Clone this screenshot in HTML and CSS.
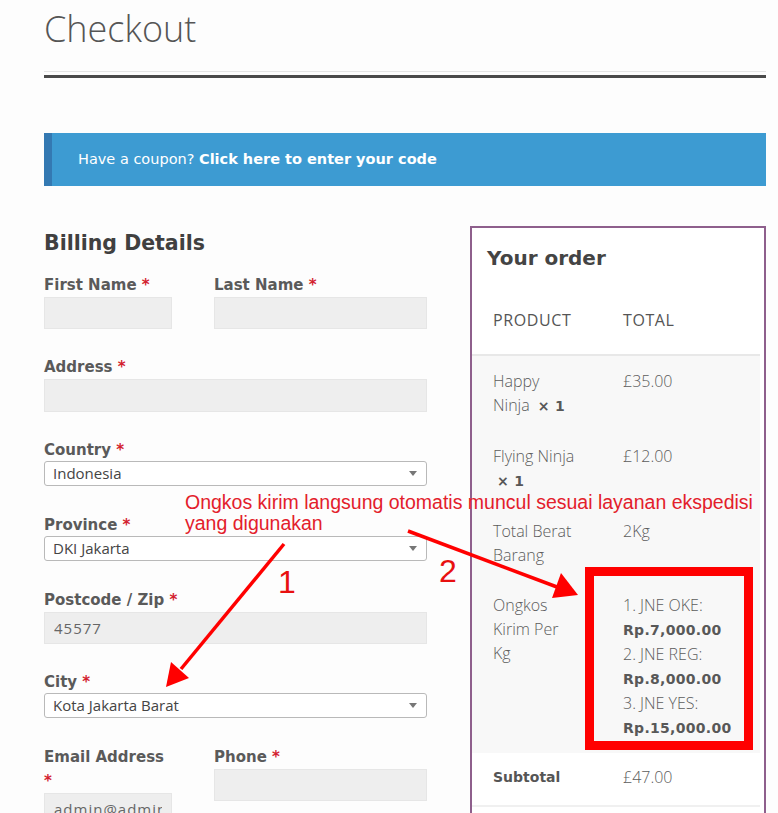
FILE: index.html
```html
<!DOCTYPE html>
<html lang="en">
  <head>
    <title>Checkout</title>
    <meta charset="utf-8" />
    <link rel="stylesheet" href="styles.css">
  </head>
  <body>
    <div id="screen">
      <div class="page">
        <header class="page-header">
          <h1>Checkout</h1>
        </header>
        <div class="rule"></div>

        <div class="coupon">
          Have a coupon? <a href="#">Click here to enter your code</a>
        </div>

        <div class="checkout">
          <section class="billing">
            <h3>Billing Details</h3>

            <div class="pair">
              <div class="field">
                <label>First Name <abbr>*</abbr></label>
                <input class="input" type="text" value="">
              </div>
              <div class="field">
                <label>Last Name <abbr>*</abbr></label>
                <input class="input" type="text" value="">
              </div>
            </div>

            <div class="field">
              <label>Address <abbr>*</abbr></label>
              <input class="input tall" type="text" value="">
            </div>

            <div class="field has-select">
              <label>Country <abbr>*</abbr></label>
              <div class="select"><span>Indonesia</span><b class="caret"></b></div>
            </div>

            <div class="field has-select">
              <label>Province <abbr>*</abbr></label>
              <div class="select"><span>DKI Jakarta</span><b class="caret"></b></div>
            </div>

            <div class="field">
              <label>Postcode / Zip <abbr>*</abbr></label>
              <input class="input" type="text" value="45577">
            </div>

            <div class="field has-select">
              <label>City <abbr>*</abbr></label>
              <div class="select"><span>Kota Jakarta Barat</span><b class="caret"></b></div>
            </div>

            <div class="pair">
              <div class="field">
                <label>Email Address <abbr>*</abbr></label>
                <input class="input" type="text" value="admin@admin.com">
              </div>
              <div class="field">
                <label>Phone <abbr>*</abbr></label>
                <input class="input" type="text" value="">
              </div>
            </div>
          </section>

          <section class="order">
            <h3>Your order</h3>
            <table class="order-table">
              <thead>
                <tr><th class="name">Product</th><th>Total</th></tr>
              </thead>
              <tbody>
                <tr>
                  <td class="name">Happy Ninja <strong>&times;&nbsp;1</strong></td>
                  <td>&pound;35.00</td>
                </tr>
                <tr>
                  <td class="name">Flying Ninja <strong>&times;&nbsp;1</strong></td>
                  <td>&pound;12.00</td>
                </tr>
                <tr>
                  <td class="name">Total Berat Barang</td>
                  <td>2Kg</td>
                </tr>
                <tr>
                  <td class="name">Ongkos Kirim Per Kg</td>
                  <td>
                    1. JNE OKE:<br><strong>Rp.7,000.00</strong><br>
                    2. JNE REG:<br><strong>Rp.8,000.00</strong><br>
                    3. JNE YES:<br><strong>Rp.15,000.00</strong>
                  </td>
                </tr>
              </tbody>
              <tfoot>
                <tr><th class="name">Subtotal</th><td>&pound;47.00</td></tr>
              </tfoot>
            </table>
          </section>
        </div>
      </div>

      <!-- annotations drawn over the screenshot -->
      <div class="notes">
        <div class="note-text">Ongkos kirim langsung otomatis muncul sesuai layanan ekspedisi<br>yang digunakan</div>
        <div class="note-num one">1</div>
        <div class="note-num two">2</div>
        <div class="note-box"></div>
        <svg class="arrows" width="778" height="813" viewBox="0 0 778 813">
          <line x1="284" y1="544" x2="181" y2="669" />
          <polygon points="166,687 189,678 171,662" />
          <line x1="408" y1="531" x2="557" y2="587" />
          <polygon points="578,595 552,598 561,573" />
        </svg>
      </div>
    </div>
  </body>
</html>
```

FILE: styles.css
```css
html {
  height: 100%;
}
body {
  margin: 0;
  padding: 0;
  background: #fdfdfd;
  color: #555;
  font-family: "DejaVu Sans", sans-serif;
  font-size: 14px;
}

#screen {
  position: relative;
  width: 778px;
  height: 813px;
  overflow: hidden;
}

.page {
  width: 722px;
  padding: 6px 0 0 44px;
}

.page-header {
  padding-bottom: 19px;
  border-bottom: 1px solid #e4e4e4;
}
.page-header h1 {
  margin: 0;
  font-family: "Open Sans", sans-serif;
  font-weight: 300;
  font-size: 36px;
  line-height: 46px;
  color: #555;
}

.rule {
  height: 3px;
  margin-top: 3px;
  background: #4a4a4a;
}

.coupon {
  margin-top: 55px;
  padding: 16px 0 16px 26px;
  background: #3d9bd2;
  border-left: 8px solid #3479b2;
  color: #fff;
  font-size: 14.5px;
  line-height: 21px;
}
.coupon a {
  color: #fff;
  font-weight: bold;
  text-decoration: none;
}

.checkout {
  display: flex;
  align-items: flex-start;
  gap: 43px;
}

/* billing form */

.billing {
  width: 383px;
  padding-top: 43px;
}
.billing h3 {
  margin: 0 0 16px;
  font-size: 20.5px;
  line-height: 28px;
  color: #404040;
}

.pair {
  display: grid;
  grid-template-columns: 128px 1fr;
  column-gap: 42px;
}

.field {
  margin-bottom: 26px;
}
.field.has-select {
  margin-bottom: 27px;
}
.field label {
  display: block;
  font-weight: bold;
  font-size: 15px;
  line-height: 24px;
  color: #5a5a5a;
}
.field abbr {
  color: #d3222f;
  text-decoration: none;
}

.input {
  display: block;
  box-sizing: border-box;
  width: 100%;
  height: 32px;
  margin: 0;
  padding: 0 10px;
  border: 0;
  border-radius: 0;
  background: #eee;
  box-shadow: inset 0 0 0 1px #e6e6e6;
  font-family: "Open Sans", sans-serif;
  font-size: 15px;
  letter-spacing: 1px;
  color: #666;
}
.input.tall {
  height: 33px;
}

.select {
  display: flex;
  align-items: center;
  box-sizing: border-box;
  height: 25px;
  margin-top: -1px;
  padding: 0 9px 2px 8px;
  background: #fff;
  border: 1px solid #b9b9b9;
  border-radius: 3px;
  font-family: "Open Sans", sans-serif;
  font-size: 15px;
  color: #444;
}
.select .caret {
  margin: 2px 0 0 auto;
  width: 0;
  height: 0;
  border-top: 5px solid #777;
  border-left: 4px solid transparent;
  border-right: 4px solid transparent;
}

/* order review */

.order {
  box-sizing: border-box;
  width: 296px;
  height: 700px;
  margin-top: 40px;
  border: 2px solid #8e5f8c;
  border-bottom: 0;
  background: #fff;
}
.order h3 {
  margin: 0;
  padding: 16px 0 0 15px;
  font-size: 20px;
  line-height: 28px;
  color: #444;
}

.order-table {
  width: 288px;
  margin-top: 20px;
  border-collapse: collapse;
  table-layout: fixed;
  font-family: "Open Sans", sans-serif;
  font-weight: 300;
  font-size: 16px;
  line-height: 24px;
  color: #5c5c5c;
}
.order-table th,
.order-table td {
  padding: 13px 0;
  text-align: left;
  vertical-align: top;
}
.order-table .name {
  width: 84px;
  padding-left: 21px;
  padding-right: 46px;
}
.order-table thead th {
  padding-top: 16px;
  padding-bottom: 22px;
  font-weight: 400;
  font-size: 16px;
  letter-spacing: 0.6px;
  text-transform: uppercase;
  color: #555;
  border-bottom: 2px solid #e8e8e8;
}
.order-table tbody td {
  background: #f8f8f8;
}
.order-table strong {
  font-family: "DejaVu Sans", sans-serif;
  font-weight: bold;
  font-size: 14px;
  letter-spacing: 0.3px;
  color: #585858;
}
.order-table tbody td.name strong {
  margin-left: 4px;
}
.order-table tfoot th,
.order-table tfoot td {
  padding-top: 12px;
  padding-bottom: 16px;
  border-bottom: 2px solid #f0f0f0;
}
.order-table tfoot th {
  font-family: "DejaVu Sans", sans-serif;
  font-weight: bold;
  font-size: 14px;
  color: #555;
}

/* annotations */

.notes {
  position: absolute;
  top: 0;
  left: 0;
  width: 778px;
  height: 813px;
  pointer-events: none;
}
.note-text {
  position: absolute;
  left: 185px;
  top: 492px;
  white-space: nowrap;
  font-family: "Liberation Sans", Arial, sans-serif;
  font-size: 19.5px;
  line-height: 21px;
  color: #e3202b;
}
.note-num {
  position: absolute;
  font-family: "Liberation Sans", Arial, sans-serif;
  font-size: 32px;
  line-height: 32px;
  color: #e81010;
}
.note-num.one {
  left: 278px;
  top: 566px;
}
.note-num.two {
  left: 439px;
  top: 555px;
}
.note-box {
  position: absolute;
  left: 585px;
  top: 567px;
  width: 168px;
  height: 183px;
  box-sizing: border-box;
  border: 9px solid #ff0000;
}
.arrows {
  position: absolute;
  top: 0;
  left: 0;
}
.arrows line {
  stroke: #f00;
  stroke-width: 3.5;
}
.arrows polygon {
  fill: #f00;
}
```
